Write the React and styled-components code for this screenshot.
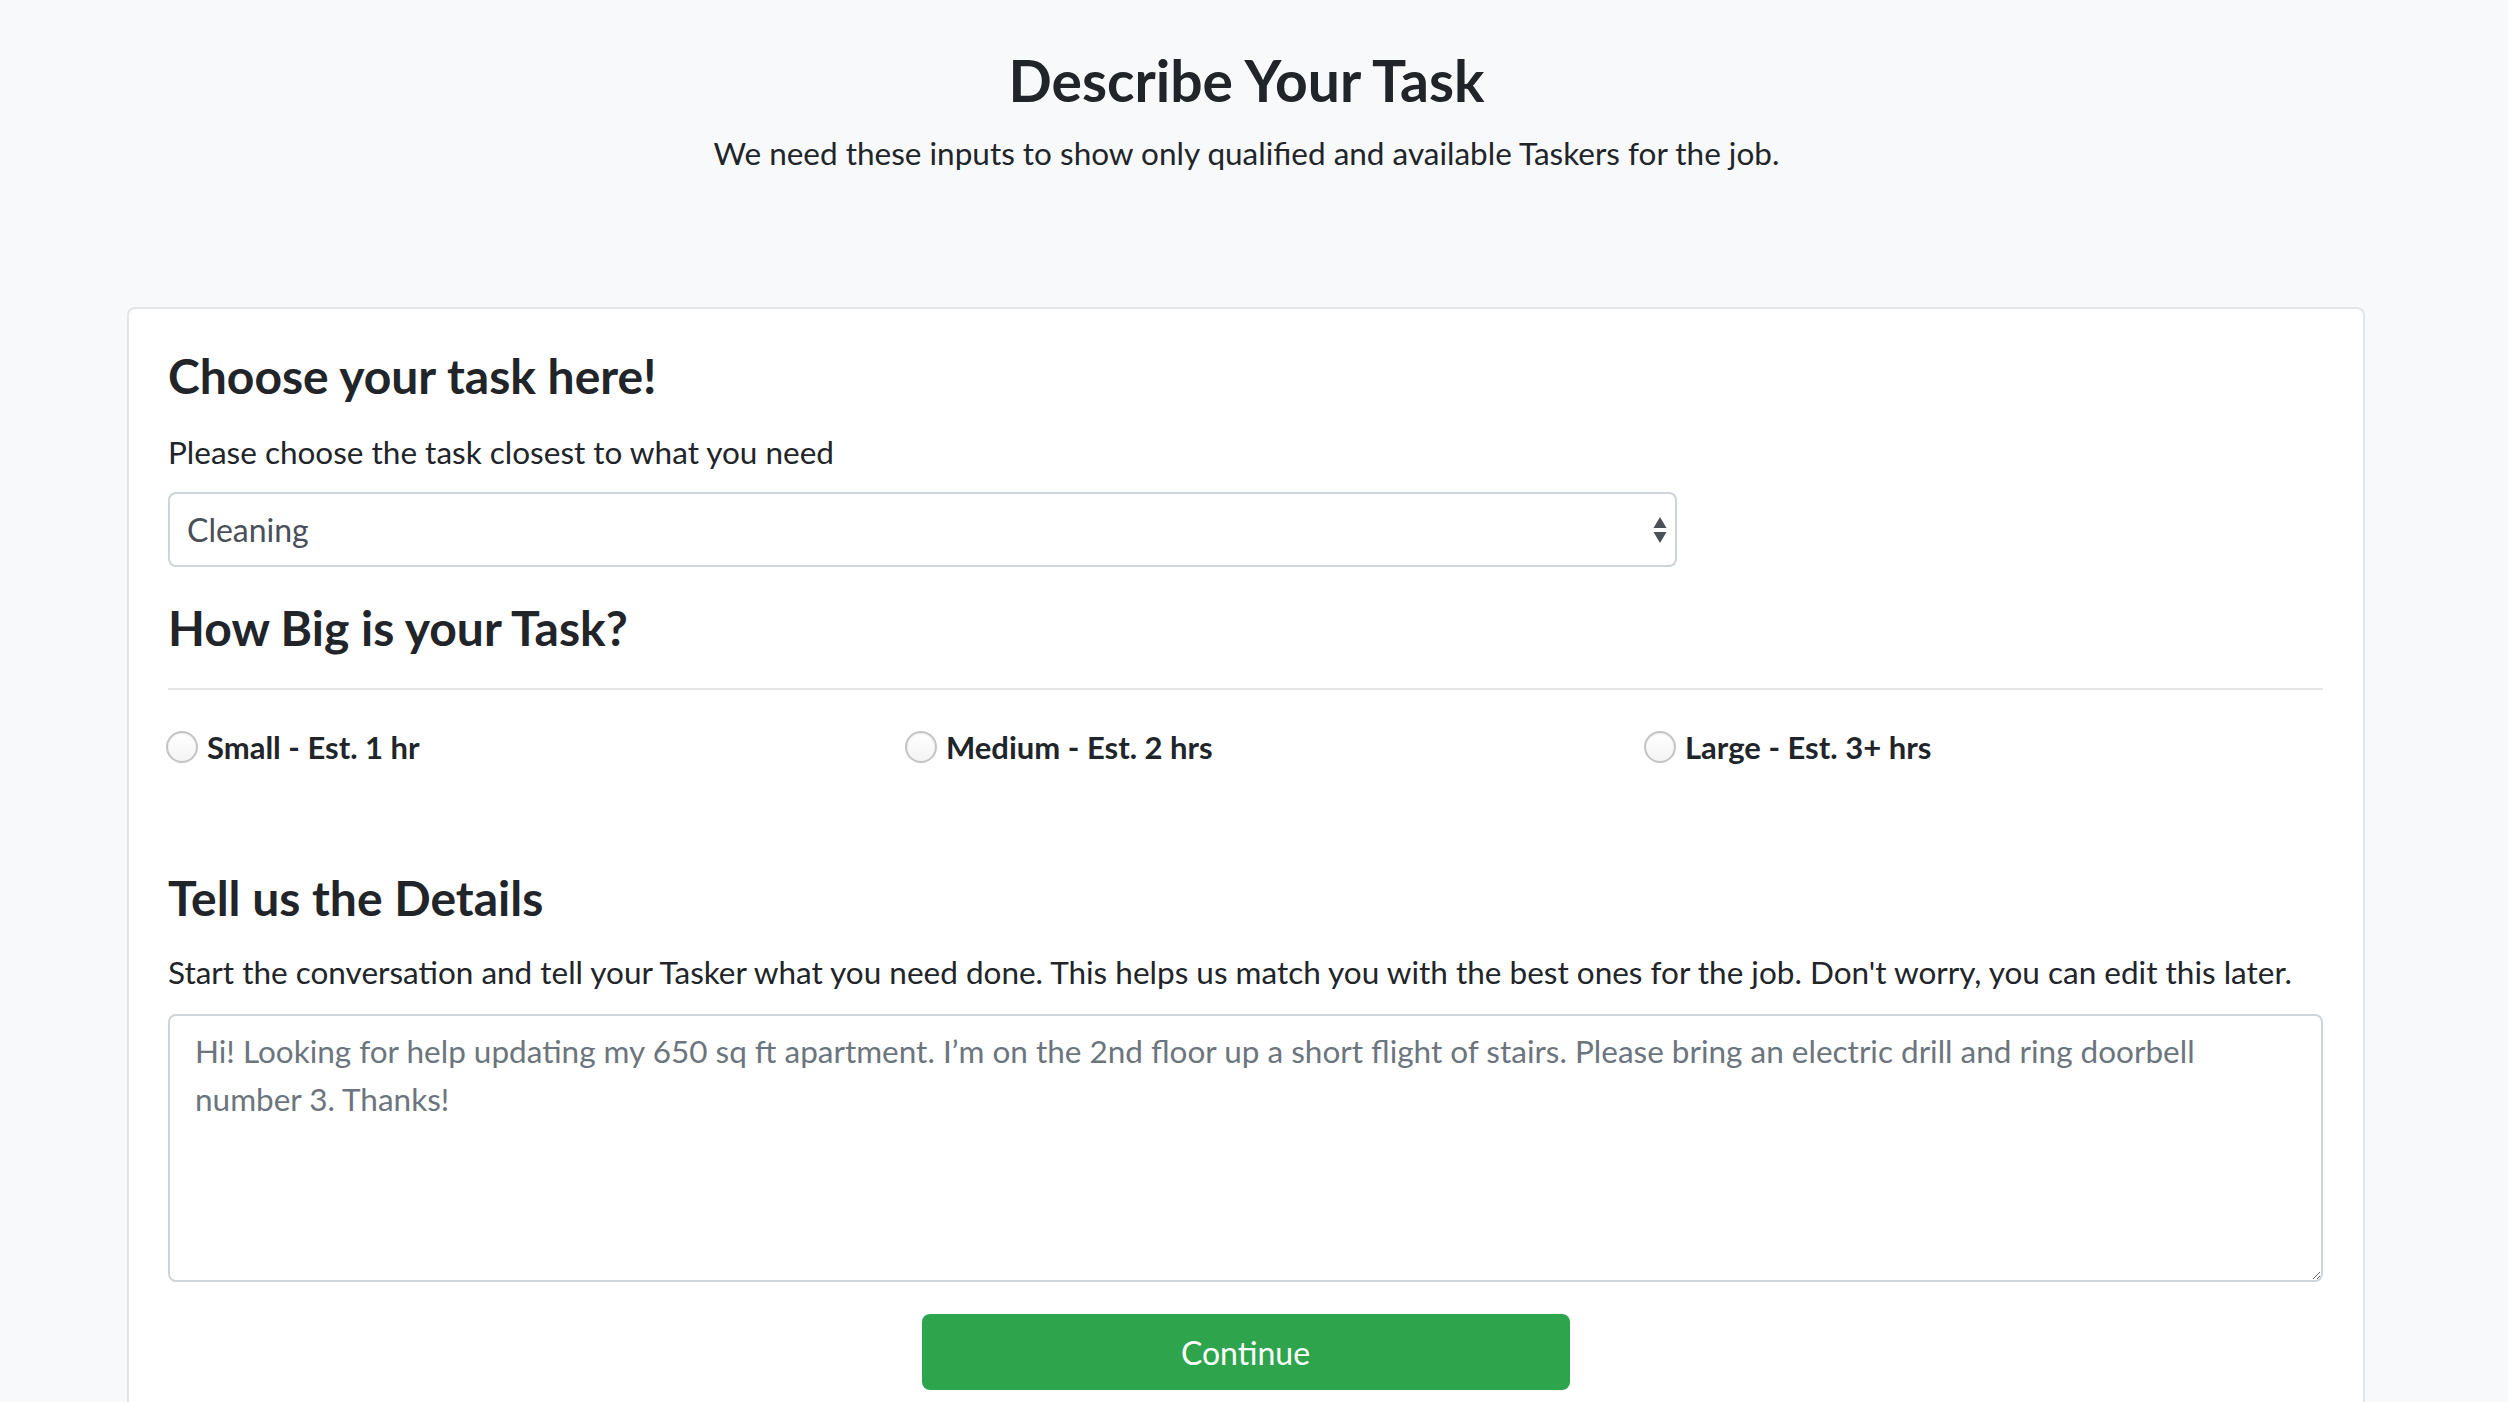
import React, { useState } from 'react';
import styled, { createGlobalStyle } from 'styled-components';

const GlobalStyle = createGlobalStyle`
    html, body {
        margin: 0;
        padding: 0;
        background: #f8f9fa;
    }
    body {
        font-family: Lato, "Open Sans", sans-serif;
        color: #212529;
    }
    * {
        box-sizing: border-box;
    }
`;

const Page = styled.div`
    min-height: 1402px;
    padding: 48px 15px 0 0;
`;

const Header = styled.header`
    text-align: center;
`;

const PageTitle = styled.h1`
    margin: 0;
    font-size: 57px;
    line-height: 64px;
    font-weight: 700;
`;

const PageLead = styled.p`
    margin: 20px 0 0;
    font-size: 31.5px;
    line-height: 43px;
`;

const Card = styled.section`
    margin: 132px 128px 0 127px;
    background: #fff;
    border: 2px solid #e3e4e6;
    border-bottom: none;
    border-radius: 8px 8px 0 0;
    padding: 39px 40px 40px 39px;
`;

const SectionTitle = styled.h3`
    margin: ${props => props.gap || 0}px 0 0;
    font-size: 48px;
    line-height: 55px;
    font-weight: 700;
`;

const Help = styled.p`
    margin: ${props => props.gap || 28}px 0 0;
    font-size: 31.5px;
    line-height: 43px;
`;

const SelectWrap = styled.div`
    position: relative;
    width: 1509px;
    margin-top: 18px;
`;

const Select = styled.select`
    appearance: none;
    -webkit-appearance: none;
    width: 100%;
    height: 75px;
    padding: 0 40px 0 17px;
    font-family: inherit;
    font-size: 32px;
    color: #495057;
    background: #fff;
    border: 2px solid #ced4da;
    border-radius: 8px;
    outline: none;
`;

const Arrows = styled.svg`
    position: absolute;
    right: 10px;
    top: 50%;
    transform: translateY(-50%);
    pointer-events: none;
`;

const Divider = styled.hr`
    margin: 33px 0 0;
    border: none;
    border-top: 2px solid #e6e6e6;
`;

const SizeGrid = styled.div`
    display: grid;
    grid-template-columns: repeat(3, 1fr);
    column-gap: 60px;
    margin-top: 35px;
    margin-left: -2px;
`;

const SizeOption = styled.label`
    display: flex;
    align-items: center;
    gap: 9px;
    height: 43px;
    font-size: 31px;
    font-weight: 700;
    cursor: pointer;
`;

const Radio = styled.input`
    appearance: none;
    -webkit-appearance: none;
    margin: 0;
    width: 32px;
    height: 32px;
    border-radius: 50%;
    border: 2px solid #c4c4c4;
    background: linear-gradient(#fff, #f4f4f4);
    box-shadow: inset 0 1px 2px rgba(0, 0, 0, 0.08);
    flex-shrink: 0;

    &:checked {
        border: 9px solid #2f7bf5;
        background: #fff;
    }
`;

const Details = styled.textarea`
    display: block;
    width: 100%;
    height: 268px;
    margin-top: 20px;
    padding: 11px 25px;
    font-family: inherit;
    font-size: 31.5px;
    line-height: 48px;
    color: #495057;
    background: #fff;
    border: 2px solid #ced4da;
    border-radius: 8px;
    resize: vertical;
    outline: none;

    &::placeholder {
        color: #6c757d;
        opacity: 1;
    }
`;

const Actions = styled.div`
    display: flex;
    justify-content: center;
    margin-top: 32px;
`;

const ContinueButton = styled.button`
    width: 648px;
    height: 76px;
    border: none;
    border-radius: 8px;
    background: #2ea44d;
    color: #fff;
    font-family: inherit;
    font-size: 32px;
    cursor: pointer;

    &:hover {
        opacity: 0.9;
    }
`;

const sizes = [
    { id: 'small', label: 'Small - Est. 1 hr' },
    { id: 'medium', label: 'Medium - Est. 2 hrs' },
    { id: 'large', label: 'Large - Est. 3+ hrs' },
];

const App = () => {
    const [task, setTask] = useState('cleaning');
    const [size, setSize] = useState('');
    const [details, setDetails] = useState('');

    return (
        <>
            <GlobalStyle />
            <Page>
                <Header>
                    <PageTitle>Describe Your Task</PageTitle>
                    <PageLead>We need these inputs to show only qualified and available Taskers for the job.</PageLead>
                </Header>

                <Card>
                    <SectionTitle>Choose your task here!</SectionTitle>
                    <Help>Please choose the task closest to what you need</Help>
                    <SelectWrap>
                        <Select value={task} onChange={(e) => setTask(e.target.value)}>
                            <option value="cleaning">Cleaning</option>
                            <option value="moving">Moving</option>
                            <option value="handyman">Handyman</option>
                            <option value="assembly">Furniture Assembly</option>
                        </Select>
                        <Arrows width="14" height="30" viewBox="0 0 14 30">
                            <path d="M7 2 L13.5 13 L0.5 13 Z" fill="#495057" />
                            <path d="M7 28 L13.5 17 L0.5 17 Z" fill="#495057" />
                        </Arrows>
                    </SelectWrap>

                    <SectionTitle gap={33}>How Big is your Task?</SectionTitle>
                    <Divider />
                    <SizeGrid>
                        {sizes.map(s => (
                            <SizeOption key={s.id}>
                                <Radio
                                    type="radio"
                                    name="size"
                                    value={s.id}
                                    checked={size === s.id}
                                    onChange={() => setSize(s.id)}
                                />
                                {s.label}
                            </SizeOption>
                        ))}
                    </SizeGrid>

                    <SectionTitle gap={102}>Tell us the Details</SectionTitle>
                    <Help gap={26}>Start the conversation and tell your Tasker what you need done. This helps us match you with the best ones for the job. Don't worry, you can edit this later.</Help>
                    <Details
                        value={details}
                        onChange={(e) => setDetails(e.target.value)}
                        placeholder="Hi! Looking for help updating my 650 sq ft apartment. I’m on the 2nd floor up a short flight of stairs. Please bring an electric drill and ring doorbell number 3. Thanks!"
                    />

                    <Actions>
                        <ContinueButton>Continue</ContinueButton>
                    </Actions>
                </Card>
            </Page>
        </>
    );
};

export default App;
